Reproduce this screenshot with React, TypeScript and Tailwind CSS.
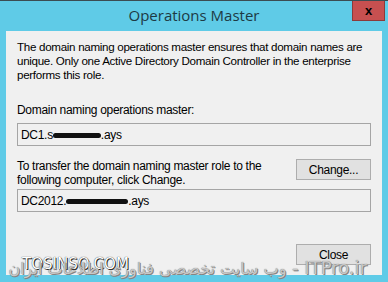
import React from "react";

const font = "font-['Liberation_Sans',Arial,sans-serif]";

function Redacted({ prefix, width }: { prefix: string; width: number }) {
  return (
    <span className="flex items-center">
      {prefix}
      <span className="relative inline-block h-[6px]" style={{ width }}>
        <span className="absolute inset-x-0 top-[1px] h-[5px] rounded-full bg-[#111] blur-[0.6px]" />
      </span>
      .ays
    </span>
  );
}

function Button({ label }: { label: string }) {
  return (
    <button className="w-[75px] h-[21px] border border-[#adadad] bg-[#e1e1e1] text-[12px] text-black flex items-center justify-center">
      {label}
    </button>
  );
}

export default function App() {
  return (
    <div className={`${font} w-[388px] h-[282px] bg-[#5fcbe7] border-t border-[#3b4c52] flex flex-col relative overflow-hidden`}>
      <div className="h-[30px] relative flex items-center justify-center">
        <span className="text-[15px] text-[#1d3a44] font-['Open_Sans',sans-serif] -mt-[1px]">Operations Master</span>
        <div className="absolute right-[3px] top-0 w-[33px] h-[20px] bg-[#c75050] border border-[#8c3a3a] border-t-0 flex items-center justify-center">
          <span className="text-[13px] font-bold text-black leading-none">x</span>
        </div>
      </div>

      <div className="flex-1 px-[6px] pb-[7px]">
        <div className="h-full bg-[#f0f0f0] px-[11px] pt-[9px] text-[12px] tracking-[-0.3px] text-black leading-[14px] flex flex-col">
          <p className="text-[11.6px] -mr-[4px]">
            The domain naming operations master ensures that domain names are unique. Only one Active Directory Domain Controller in the enterprise performs this role.
          </p>

          <p className="mt-[21px]">Domain naming operations master:</p>
          <div className="mt-[6px] h-[23px] border border-[#a5a5a5] bg-[#f0f0f0] flex items-center px-[3px]">
            <Redacted prefix="DC1.s" width={48} />
          </div>

          <div className="mt-[13px] flex items-start justify-between">
            <p className="w-[260px]">To transfer the domain naming master role to the following computer, click Change.</p>
            <Button label="Change..." />
          </div>
          <div className="mt-[2px] h-[23px] border border-[#a5a5a5] bg-[#f0f0f0] flex items-center px-[3px]">
            <Redacted prefix="DC2012." width={62} />
          </div>

          <div className="mt-[32px] flex justify-end">
            <Button label="Close" />
          </div>
        </div>
      </div>

      <div className="absolute left-[22px] top-[252px] text-[15px] text-white font-['DejaVu_Sans',sans-serif] [text-shadow:_0_0_1px_#000,_1px_1px_0_#333]">
        TOSINSO.COM
      </div>
      <div
        dir="rtl"
        className="absolute right-[21px] top-[257px] text-[18px] leading-[20px] text-[#c8c8c8] font-['DejaVu_Sans',sans-serif] whitespace-nowrap [text-shadow:_0_0_1px_#666,_1px_1px_0_#888]"
      >
        ITPro.ir - <span className="text-[16px]">وب سایت تخصصی فناوری اطلاعات ایران</span>
      </div>
    </div>
  );
}
